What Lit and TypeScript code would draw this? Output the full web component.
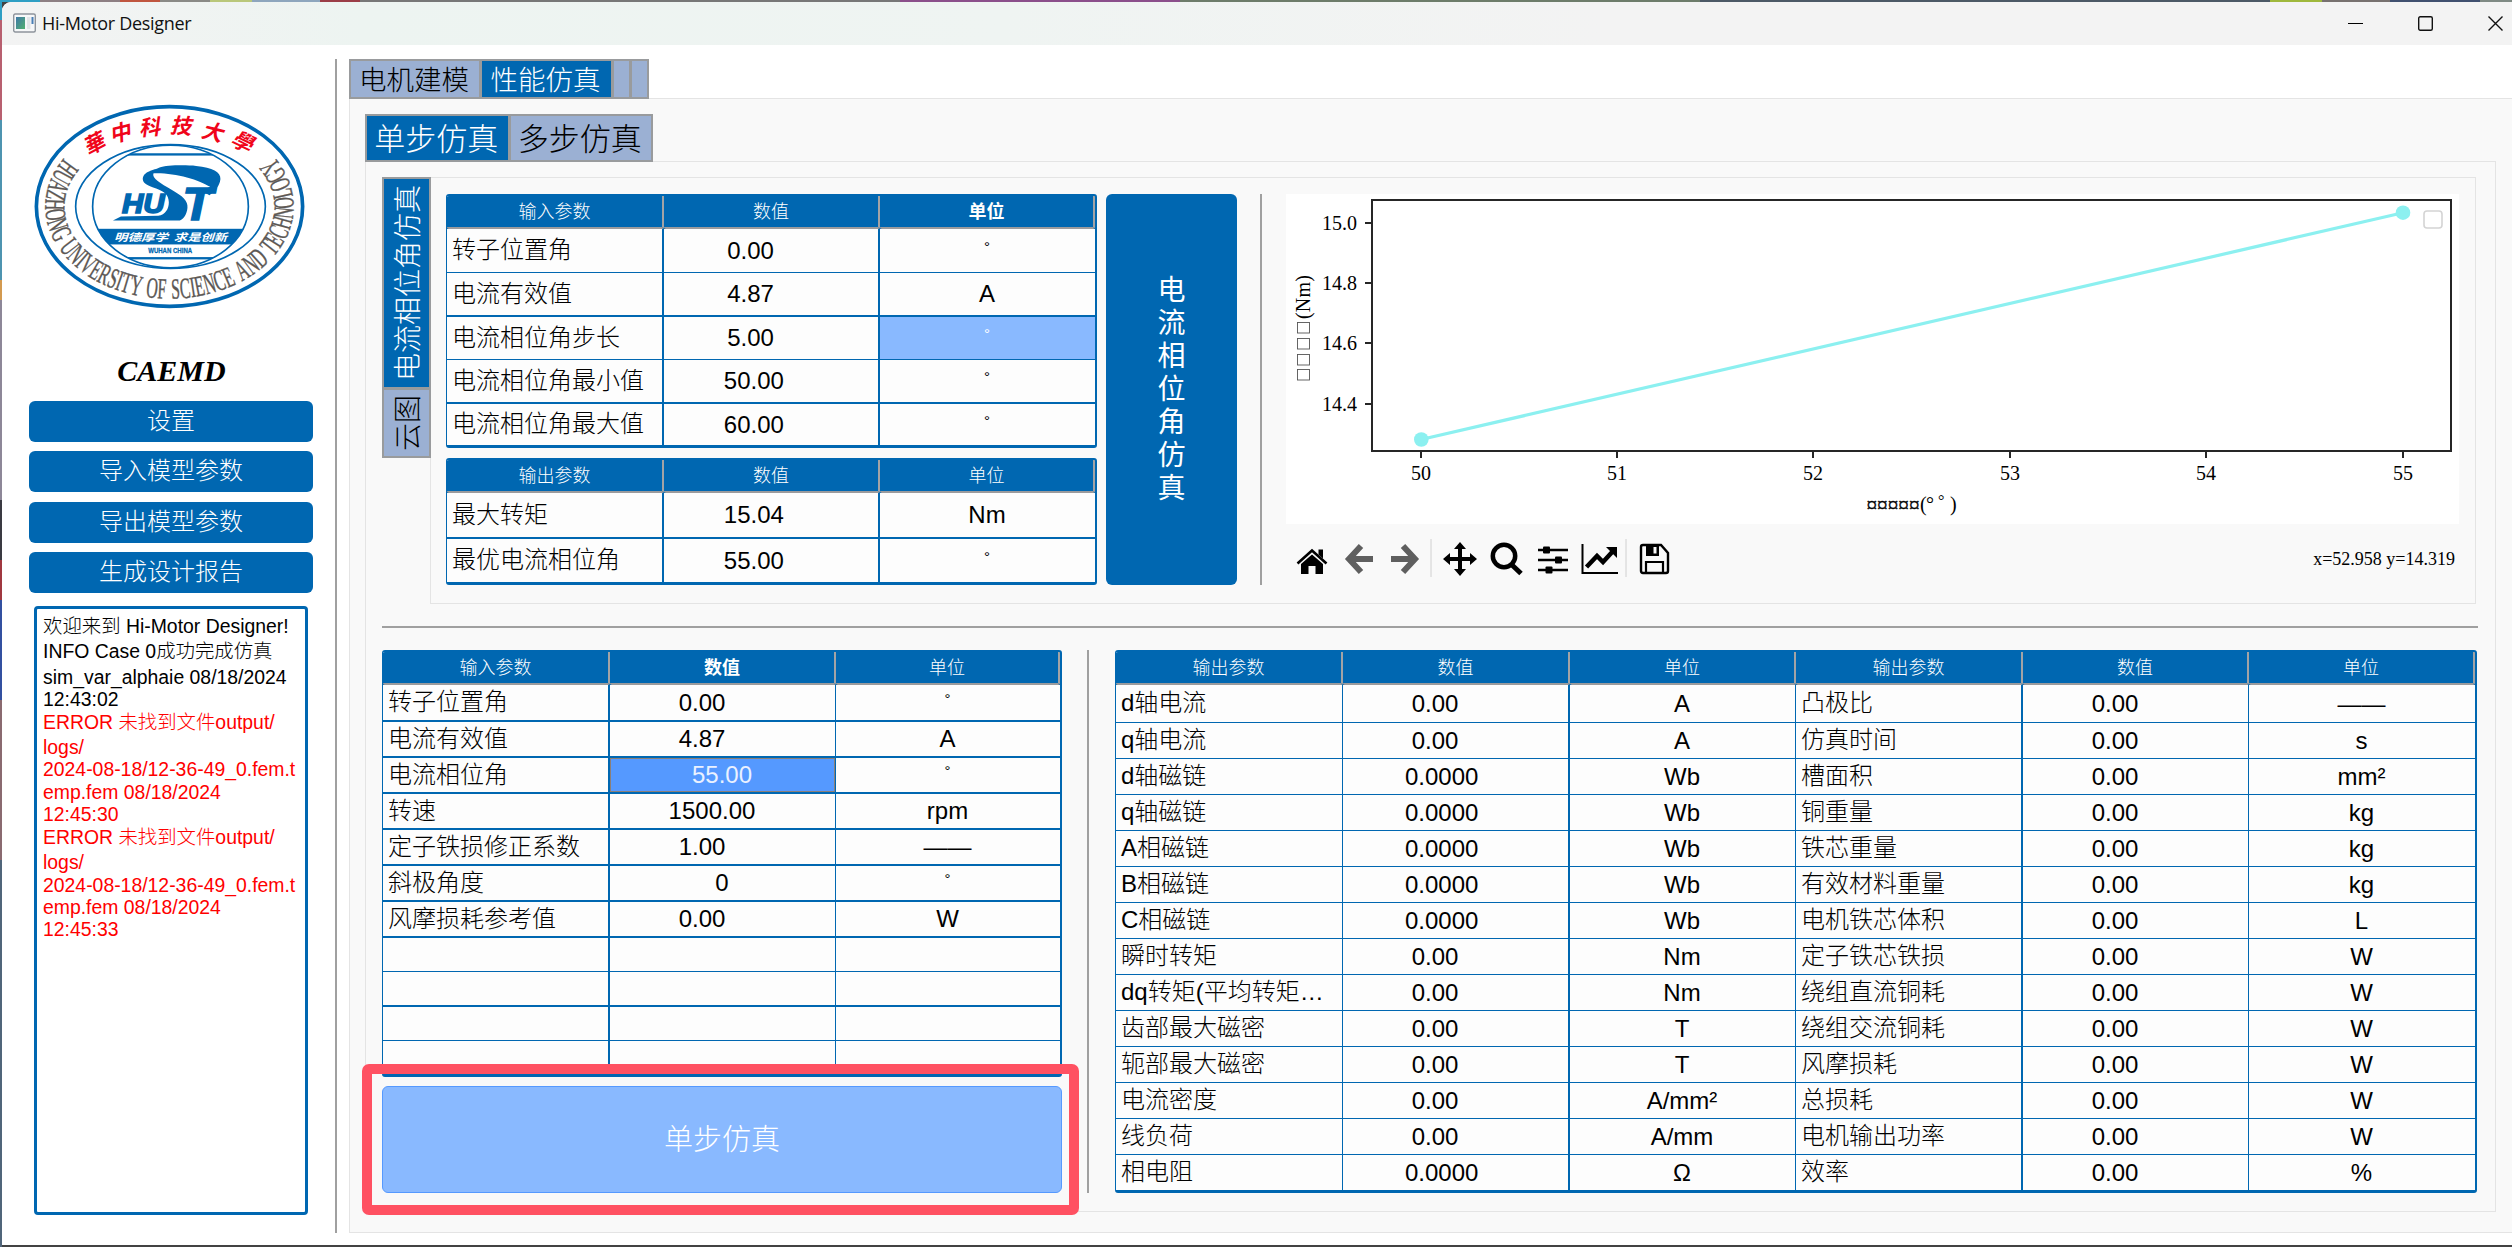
import { LitElement, html, svg, css, nothing } from "lit";
import { customElement, property } from "lit/decorators.js";
import { classMap } from "lit/directives/class-map.js";
import { styleMap } from "lit/directives/style-map.js";

const BLUE = "#0067b1";

type Row = { h: number; line: number; cells: string[] };

const num = (v: string) => v.padEnd(10, " ");

@customElement("param-table")
class ParamTable extends LitElement {
  @property({ attribute: false }) heads: string[] = [];
  @property({ attribute: false }) cols: number[] = [];
  @property({ attribute: false }) lines: number[] = [];
  @property({ attribute: false }) rows: Row[] = [];
  @property({ type: Number }) boldHead = -1;
  @property() selected = "";
  @property() tone = "light";

  static styles = css`
    :host { display: block; }
    .table {
      border: solid #0067b1; border-width: 2px 2px 3px 1px; border-radius: 3px;
      background: #fdfdfd; overflow: hidden;
      font: 24px/1 "Liberation Sans", "Noto Sans CJK SC", sans-serif; color: #000;
    }
    .row { display: grid; box-sizing: border-box; }
    .head { height: 33px; background: #0067b1; color: #fff; font-size: 18px; font-weight: 300; }
    .h {
      display: flex; align-items: center; justify-content: center; box-sizing: border-box;
      border-right: 2px solid #a3a3a5; border-bottom: 2px solid #9b9b9d; border-radius: 0 0 2px 2px;
    }
    .bold { font-weight: 700; }
    .c {
      display: flex; align-items: center; justify-content: center; box-sizing: border-box;
      white-space: pre; border: 0 solid #0067b1; min-width: 0; font-weight: 300; padding-right: 1px;
    }
    .c.name { justify-content: flex-start; padding-left: 5px; padding-bottom: 1px; }
    .c.deg { font-size: 15px; padding-bottom: 9px; }
    .c.sel { background: #89b9ff; color: #fff; }
    .c.sel.strong { background: #5599ff; color: #eaf1ff; box-shadow: inset 0 0 0 1px #8b7f78; }
  `;

  render() {
    const grid = this.cols.map((c) => `${c}px`).join(" ");
    return html`<div class="table">
      <div class="row head" style=${styleMap({ gridTemplateColumns: grid })}>
        ${this.heads.map((t, i) => html`<div class=${classMap({ h: true, bold: i === this.boldHead })}>${t}</div>`)}
      </div>
      ${this.rows.map((r, ri) => html`<div class="row" style=${styleMap({ gridTemplateColumns: grid, height: `${r.h}px` })}>
        ${this.cols.map((_, i) => {
          const t = r.cells[i] ?? "";
          const sel = this.selected === `${ri},${i}`;
          return html`<div class=${classMap({
            c: true, name: i % 3 === 0, deg: t === "°", sel, strong: sel && this.tone === "strong",
          })} style=${styleMap({ borderRightWidth: `${this.lines[i]}px`, borderBottomWidth: `${r.line}px` })}>${t}</div>`;
        })}
      </div>`)}
    </div>`;
  }
}

const CAP: Record<string, number> = {
  A: 0.72, C: 0.67, D: 0.72, E: 0.61, F: 0.56, G: 0.72, H: 0.72, I: 0.33, L: 0.61, N: 0.72,
  O: 0.72, R: 0.67, S: 0.56, T: 0.61, U: 0.72, V: 0.72, Y: 0.72, Z: 0.61, " ": 0.34,
};

@customElement("hust-emblem")
class HustEmblem extends LitElement {
  static styles = css`
    :host { display: block; }
    svg { display: block; width: 273px; height: 207px; }
    .ring { font: 88px "Liberation Serif", serif; fill: #5c5855; stroke: #5c5855; stroke-width: 1.2; text-anchor: middle; }
    .name { font: 700 64px "Noto Sans CJK SC", sans-serif; fill: #f0051a; text-anchor: middle; }
    .motto { font: italic 700 31px "Noto Sans CJK SC", sans-serif; fill: #fff; }
    .city { font: 700 21px "Liberation Sans", sans-serif; fill: #0067b1; stroke: #0067b1; stroke-width: 0.8; }
    .hu { font: italic 700 84px "Liberation Sans", sans-serif; fill: #0067b1; stroke: #0067b1; stroke-width: 5; }
    .t { font: italic 700 138px "Liberation Sans", sans-serif; fill: #0067b1; stroke: #0067b1; stroke-width: 4; }
  `;

  private ring() {
    const text = "HUAZHONG UNIVERSITY OF SCIENCE AND TECHNOLOGY";
    const cx = 510, cy = 621, rx = 373, ry = 277;
    const a0 = Math.PI + Math.asin(146 / ry), a1 = -Math.asin(150 / ry);
    const n = 1500;
    const pts: { a: number; s: number }[] = [];
    let s = 0, px = 0, py = 0;
    for (let i = 0; i <= n; i++) {
      const a = a0 + ((a1 - a0) * i) / n;
      const x = cx + rx * Math.cos(a), y = cy + ry * Math.sin(a);
      if (i) s += Math.hypot(x - px, y - py);
      px = x; py = y;
      pts.push({ a, s });
    }
    const total = [...text].reduce((t, c) => t + CAP[c], 0);
    let used = 0;
    return [...text].map((c) => {
      const mid = ((used + CAP[c] / 2) / total) * s;
      used += CAP[c];
      if (c === " ") return nothing;
      const p = pts.find((q) => q.s >= mid) ?? pts[n];
      const x = cx + rx * Math.cos(p.a), y = cy + ry * Math.sin(p.a);
      const deg = (Math.atan2(-ry * Math.cos(p.a), rx * Math.sin(p.a)) * 180) / Math.PI;
      return svg`<text class="ring" transform="translate(${x} ${y}) rotate(${deg}) scale(0.54 1)">${c}</text>`;
    });
  }

  render() {
    const name: [string, number, number, number][] = [
      ["華", 288, 432, -28], ["中", 366, 400, -14], ["科", 455, 384, -4],
      ["技", 549, 380, 4], ["大", 643, 399, 14], ["學", 733, 429, 26],
    ];
    return html`<svg viewBox="100 310 820 622">
      <defs><clipPath id="disc"><ellipse cx="513" cy="621" rx="235" ry="185"/></clipPath></defs>
      <ellipse cx="510" cy="621" rx="400" ry="300" fill="#fff" stroke=${BLUE} stroke-width="11"/>
      <ellipse cx="513" cy="621" rx="285" ry="186" fill="none" stroke=${BLUE} stroke-width="5"/>
      <g clip-path="url(#disc)" fill=${BLUE}>
        <rect x="270" y="461" width="490" height="7"/>
        <rect x="270" y="688" width="490" height="47"/>
        <rect x="270" y="773" width="490" height="7"/>
      </g>
      <ellipse cx="513" cy="621" rx="234" ry="184" fill="none" stroke=${BLUE} stroke-width="5"/>
      ${this.ring()}
      ${name.map(([c, x, y, r]) => svg`<text class="name" transform="translate(${x} ${y}) rotate(${r}) skewX(-12)" y="22">${c}</text>`)}
      <path fill=${BLUE} d="M430 541C428 515 465 512 480 504C500 496 560 496 590 499C640 503 664 518 663 538C661 560 645 576 630 587L606 574L632 562C600 540 520 518 462 521C455 535 485 552 515 570C550 590 566 604 564 625C562 645 553 658 541 663L340 663L364 651L476 649C498 645 508 628 508 608C507 585 495 577 470 567C445 558 432 552 430 541Z"/>
      <text class="hu" x="367" y="641" textLength="128" lengthAdjust="spacingAndGlyphs">HU</text>
      <text class="t" x="548" y="662" textLength="92" lengthAdjust="spacingAndGlyphs">T</text>
      <text class="motto" x="343" y="724" textLength="163" lengthAdjust="spacingAndGlyphs">明德厚学</text>
      <text class="motto" x="523" y="724" textLength="160" lengthAdjust="spacingAndGlyphs">求是创新</text>
      <text class="city" x="446" y="762" textLength="132" lengthAdjust="spacingAndGlyphs">WUHAN CHINA</text>
    </svg>`;
  }
}

@customElement("torque-chart")
class TorqueChart extends LitElement {
  static styles = css`
    :host { display: block; }
    svg { display: block; width: 1173px; height: 330px; background: #fff; }
    text { font: 20px "Liberation Serif", serif; fill: #000; }
    .glyphs { stroke: #000; stroke-width: 0.4; }
    .small { font-size: 16px; }
  `;

  render() {
    const xs: [number, string][] = [[135, "50"], [331, "51"], [527, "52"], [724, "53"], [920, "54"], [1117, "55"]];
    const ys: [number, string][] = [[29, "15.0"], [89, "14.8"], [149, "14.6"], [210, "14.4"]];
    return html`<svg viewBox="0 0 1173 330">
      <line x1="135" y1="245.5" x2="1117" y2="18.7" stroke="#8cf0f0" stroke-width="3.2"/>
      <circle cx="135.3" cy="245.5" r="7.3" fill="#8cf0f0"/>
      <circle cx="1117" cy="18.7" r="7.3" fill="#8cf0f0"/>
      <rect x="86" y="6" width="1079" height="251" fill="none" stroke="#262626" stroke-width="2"/>
      ${xs.map(([x, t]) => svg`<line x1=${x} y1="257" x2=${x} y2="264" stroke="#262626" stroke-width="2"/>
        <text x=${x} y="286" text-anchor="middle">${t}</text>`)}
      ${ys.map(([y, t]) => svg`<line x1="79" y1=${y} x2="86" y2=${y} stroke="#262626" stroke-width="2"/>
        <text x="71" y=${y + 7} text-anchor="end">${t}</text>`)}
      <rect x="1138" y="17" width="18" height="17" rx="3" fill="#fff" stroke="#d4d4d4" stroke-width="1.6"/>
      ${[129, 145, 161, 176].map((y) => svg`<rect x="11.5" y=${y - 0.5} width="12" height="10.5" fill="none" stroke="#555" stroke-width="0.9"/>`)}
      <text transform="translate(24 125) rotate(-90)" textLength="44">(Nm)</text>
      <text class="glyphs" x="580.5" y="318" textLength="53" lengthAdjust="spacingAndGlyphs">¤¤¤¤¤</text>
      <text x="634" y="317">(</text>
      <text x="640" y="317">°</text>
      <text class="small" x="652" y="312">°</text>
      <text x="664" y="317">)</text>
    </svg>`;
  }
}

@customElement("app-root")
class AppRoot extends LitElement {
  static styles = css`
    :host { display: block; }
    * { box-sizing: border-box; }
    .desktop {
      width: 2512px; height: 1247px; padding: 2px 0 2px 2px; overflow: hidden;
      font-family: "Liberation Sans", "Noto Sans CJK SC", sans-serif; font-weight: 300;
      background:
        linear-gradient(90deg, #2f9fc4 0 40px, #8d7f83 40px 120px, #c0563f 120px 160px, #8a8a86 160px 210px, #b9c77a 210px 252px,
          #8ea6bd 252px 320px, #9b3d47 320px 360px, #777 360px 900px, #8b4f8b 900px 1180px, #6d7c6a 1180px 1700px, #4c5966 1700px 2270px,
          #9fb83c 2270px 2322px, #77716f 2322px 2390px, #40506f 2390px 2480px, #7f8a84 2480px) top / 100% 2px no-repeat,
        linear-gradient(#2f9fc4 0 20px, #b86070 20px 120px, #4d94b0 120px 280px, #d39a50 280px 300px, #8d8798 300px 500px,
          #3a3a42 500px 560px, #a03840 560px 600px, #3350a0 600px 700px, #8a6a70 700px 860px, #50657a 860px) left / 2px 100% no-repeat,
        #434343;
    }
    .window { height: 1243px; display: flex; flex-direction: column; background: #fff; border-radius: 9px 0 0 0; overflow: hidden; }
    .titlebar {
      height: 43px; flex: none; display: flex; align-items: center; padding: 0 9px 2px 11px;
      background: linear-gradient(90deg, #f3f3f3 0, #edf4f1 360px, #eff4f2 1000px, #f3f3f3 1600px);
    }
    .titlebar svg { display: block; }
    .title { font: 18px/24px "Open Sans", sans-serif; margin-left: 6px; color: #111; flex: 1; letter-spacing: -0.3px; }
    .controls { display: flex; gap: 55px; align-items: center; padding-top: 1px; }
    .content { flex: 1; display: flex; min-height: 0; }
    .sidebar { width: 333px; display: flex; flex-direction: column; padding: 58px 22px 30px 27px; }
    .emblem { margin-left: 4px; }
    .brand { font: italic 700 30px/36px "Liberation Serif", serif; text-align: center; margin: 43px 0 12px; padding-left: 1px; }
    .actions { display: flex; flex-direction: column; gap: 9.3px; }
    .action {
      height: 41px; flex: none; border-radius: 6px; background: #0067b1; color: #fff; font-size: 24px; line-height: 39px; text-align: center;
    }
    .log {
      flex: 1; margin: 13px 5px 0 5px; border: 3px solid #0067b1; border-radius: 4px; padding: 6px 0 0 6px;
      font-size: 19.4px; line-height: 22.4px; white-space: pre; color: #000;
    }
    .line { height: 22.45px; }
    .line.tall { height: 25.4px; }
    .err { color: #f00; }
    .vsplit { width: 2px; background: #a0a0a0; flex: none; }
    .vsplit.outer { margin: 14px 12px 12px 0; }
    .main { flex: 1; display: flex; flex-direction: column; padding: 14px 0 12px; min-width: 0; }
    .tabs { display: flex; position: relative; z-index: 1; margin-bottom: -1px; }
    .tab {
      border: 2px solid #999b9d; background: #9bb0d3; color: #000; display: flex; align-items: center; justify-content: center;
      margin-right: -1px; padding: 0 2px 3px 0;
    }
    .tab.on { background: #0067b1; color: #fff; }
    .big .tab { height: 40px; font-size: 27.5px; }
    .sub .tab { height: 48px; font-size: 31px; }
    .w1 { width: 132px; } .w2 { width: 133px; } .w3 { width: 19px; } .w4 { width: 144.5px; }
    .panel { flex: 1; border: 1px solid #e4e4e4; background: #f9f9f9; display: flex; flex-direction: column; min-height: 0; }
    .p1 { border-right: 0; padding: 15px 16px 20px 15px; }
    .p2 { padding: 15px 17px 17px 16px; }
    .upper { height: 427px; display: flex; flex: none; margin-right: 2px; }
    .vtabs { display: flex; flex-direction: column; width: 49px; margin-right: -1px; position: relative; z-index: 1; }
    .vtabs .tab { margin: 0 0 -1px; padding: 0 2px 0 0; font-size: 28px; writing-mode: vertical-rl; text-orientation: sideways; width: 49px; }
    .vtabs .tab span { transform: rotate(180deg); }
    .v1 { height: 212px; } .v2 { height: 70px; }
    .p3 { flex-direction: row; padding: 16px 16px 0 15px; }
    .pair { width: 651px; display: flex; flex-direction: column; gap: 10px; }
    .run {
      width: 131px; height: 391px; margin-left: 9px; border-radius: 6px; background: #0067b1; color: #fff; font-size: 28px; line-height: 33px;
      display: flex; flex-direction: column; align-items: center; justify-content: center; text-align: center; font-weight: 400;
    }
    .upper .vsplit { height: 391px; margin: 0 24px 0 23px; }
    .figure { width: 1173px; }
    .tools { height: 40px; margin-top: 14px; display: flex; align-items: center; }
    .tools svg { display: block; }
    .coords { margin-left: auto; font: 18px "Liberation Serif", serif; padding: 3px 4px 0 0; }
    .hsplit { height: 2px; background: #a0a0a0; margin: 22px 0; flex: none; }
    .lower { display: flex; height: 543px; flex: none; }
    .left { width: 680px; position: relative; display: flex; flex-direction: column; gap: 9px; }
    .step {
      height: 107px; border: 1px solid #5599ff; border-radius: 6px; background: #89b9ff; color: #fff; font-size: 29px;
      display: flex; align-items: center; justify-content: center; padding-bottom: 6px;
    }
    .mark { position: absolute; left: -20.5px; top: 413.5px; width: 717px; height: 151px; border: 10.5px solid #ff5162; border-radius: 7px; }
    .lower .vsplit { margin: 0 26px 0 25px; }
    .right { width: 1362px; }
  `;

  private tool(w: number, ml: number, body: unknown) {
    return html`<svg width=${w} height="40" viewBox="0 0 ${w} 40" style=${styleMap({ marginLeft: `${ml}px` })}>${body}</svg>`;
  }

  private toolbar() {
    return html`<div class="tools">
      ${this.tool(32, 10, svg`<path d="M1.500 25.500L16 12.500L30.500 25.500" fill="none" stroke="#000" stroke-width="2.600"/><path d="M22.500 11.500h4.500v9l-4.500-4z"/><path d="M5 26L16 16.500L27 26V36H19.500V28H12.500V36H5Z"/>`)}
      ${this.tool(30, 16, svg`<path d="M17 8L5 21L17 34M6 21H29" fill="none" stroke="#5f5f5f" stroke-width="6"/>`)}
      ${this.tool(30, 16, svg`<path d="M13 8L25 21L13 34M24 21H1" fill="none" stroke="#5f5f5f" stroke-width="6"/>`)}
      ${this.tool(2, 10, svg`<path d="M1 1V39" stroke="#d0d0d0"/>`)}
      ${this.tool(36, 10, svg`<path d="M18 8V34M5 21H31" stroke="#000" stroke-width="4"/><path d="M18 4L24 11H12ZM18 38L24 31H12ZM1 21L8 15V27ZM35 21L28 15V27Z"/>`)}
      ${this.tool(34, 12, svg`<circle cx="14" cy="18" r="11.200" fill="none" stroke="#000" stroke-width="4.500"/><path d="M21.500 26.500L31 35.500" stroke="#000" stroke-width="5"/>`)}
      ${this.tool(32, 13, svg`<path d="M1 12H31M1 22H31M1 32H31" stroke="#000" stroke-width="2.400"/><rect x="6" y="8.500" width="7" height="7" rx="1"/><rect x="18" y="18.500" width="7" height="7" rx="1"/><rect x="8.500" y="28.500" width="7" height="7" rx="1"/>`)}
      ${this.tool(38, 12, svg`<path d="M1.500 6V35H37" fill="none" stroke="#000" stroke-width="2"/><path d="M5.500 29L16 18L22 24L33 12" fill="none" stroke="#000" stroke-width="4.500"/><path d="M25 9H36V20Z"/>`)}
      ${this.tool(2, 6, svg`<path d="M1 1V39" stroke="#d0d0d0"/>`)}
      ${this.tool(32, 12, svg`<path d="M2 9Q2 7 4 7H22L29 15V33Q29 35 27 35H4Q2 35 2 33Z" fill="none" stroke="#000" stroke-width="2.400"/><path d="M7 7H20V18H7Z M14.500 9V15.500H17.500V9Z" fill-rule="evenodd"/><path d="M7 35V24H24V35" fill="none" stroke="#000" stroke-width="2.200"/>`)}
      <div class="coords">x=52.958 y=14.319</div>
    </div>`;
  }

  render() {
    const r = (h: number, line: number, ...cells: string[]): Row => ({ h, line, cells });
    const sweepIn = [
      r(44, 1, "转子位置角", num("0.00"), "°"),
      r(44, 2, "电流有效值", num("4.87"), "A"),
      r(43, 1, "电流相位角步长", num("5.00"), "°"),
      r(44, 2, "电流相位角最小值", num("50.00"), "°"),
      r(41, 0, "电流相位角最大值", num("60.00"), "°"),
    ];
    const sweepOut = [
      r(46, 2, "最大转矩", num("15.04"), "Nm"),
      r(43, 0, "最优电流相位角", num("55.00"), "°"),
    ];
    const stepIn = [
      r(37, 2, "转子位置角", num("0.00"), "°"),
      r(36, 2, "电流有效值", num("4.87"), "A"),
      r(36, 2, "电流相位角", "55.00", "°"),
      r(36, 2, "转速", num("1500.00"), "rpm"),
      r(36, 2, "定子铁损修正系数", num("1.00"), "——"),
      r(36, 2, "斜极角度", "0", "°"),
      r(36, 2, "风摩损耗参考值", num("0.00"), "W"),
      r(34, 1), r(35, 2), r(34, 1), r(33, 0),
    ];
    const z = num("0.00"), z4 = num("0.0000");
    const out: string[][] = [
      ["d轴电流", z, "A", "凸极比", z, "——"],
      ["q轴电流", z, "A", "仿真时间", z, "s"],
      ["d轴磁链", z4, "Wb", "槽面积", z, "mm²"],
      ["q轴磁链", z4, "Wb", "铜重量", z, "kg"],
      ["A相磁链", z4, "Wb", "铁芯重量", z, "kg"],
      ["B相磁链", z4, "Wb", "有效材料重量", z, "kg"],
      ["C相磁链", z4, "Wb", "电机铁芯体积", z, "L"],
      ["瞬时转矩", z, "Nm", "定子铁芯铁损", z, "W"],
      ["dq转矩(平均转矩…", z, "Nm", "绕组直流铜耗", z, "W"],
      ["齿部最大磁密", z, "T", "绕组交流铜耗", z, "W"],
      ["轭部最大磁密", z, "T", "风摩损耗", z, "W"],
      ["电流密度", z, "A/mm²", "总损耗", z, "W"],
      ["线负荷", z, "A/mm", "电机输出功率", z, "W"],
      ["相电阻", z4, "Ω", "效率", z, "%"],
    ];
    const outRows = out.map((cells, i) => r(i === 0 ? 38 : i === 13 ? 35 : 36, i === 13 ? 0 : 1, ...cells));
    const inHeads = ["输入参数", "数值", "单位"], outHeads = ["输出参数", "数值", "单位"];
    const log: [string, boolean, boolean][] = [
      ["欢迎来到 Hi-Motor Designer!", true, false],
      ["INFO Case 0成功完成仿真", true, false],
      ["sim_var_alphaie 08/18/2024", false, false],
      ["12:43:02", false, false],
      ...["12:45:30", "12:45:33"].flatMap((t): [string, boolean, boolean][] => [
        ["ERROR 未找到文件output/", true, true],
        ["logs/", false, true],
        ["2024-08-18/12-36-49_0.fem.t", false, true],
        ["emp.fem 08/18/2024", false, true],
        [t, false, true],
      ]),
    ];

    return html`<div class="desktop"><div class="window">
      <div class="titlebar">
        <svg width="23" height="20" viewBox="0 0 23 20">
          <defs><linearGradient id="ic" x2="1" y2="1"><stop stop-color="#3f78a8"/><stop offset="1" stop-color="#52b070"/></linearGradient></defs>
          <rect x="0.700" y="1" width="21.600" height="18" rx="1.500" fill="#f6f7f8" stroke="#8e949c" stroke-width="1.400"/>
          <rect x="3" y="4" width="9" height="12" fill="url(#ic)"/>
          <rect x="14" y="4" width="3.500" height="12" fill="#e3e5e8"/>
          <rect x="18.500" y="4" width="2" height="7" fill="#4a7fb5"/>
        </svg>
        <div class="title">Hi-Motor Designer</div>
        <div class="controls">
          <svg width="15" height="15" viewBox="0 0 15 15"><path d="M0 7.500H15" stroke="#000"/></svg>
          <svg width="15" height="15" viewBox="0 0 15 15"><rect x="0.700" y="0.700" width="13.600" height="13.600" rx="1.500" fill="none" stroke="#111" stroke-width="1.400"/></svg>
          <svg width="15" height="15" viewBox="0 0 15 15"><path d="M0.500 0.500L14.500 14.500M14.500 0.500L0.500 14.500" stroke="#111" stroke-width="1.400"/></svg>
        </div>
      </div>
      <div class="content">
        <div class="sidebar">
          <hust-emblem class="emblem"></hust-emblem>
          <div class="brand">CAEMD</div>
          <div class="actions">
            ${["设置", "导入模型参数", "导出模型参数", "生成设计报告"].map((t) => html`<div class="action">${t}</div>`)}
          </div>
          <div class="log">${log.map(([t, tall, err]) => html`<div class=${classMap({ line: true, tall, err })}>${t}</div>`)}</div>
        </div>
        <div class="vsplit outer"></div>
        <div class="main">
          <div class="tabs big">
            <div class="tab w1">电机建模</div><div class="tab on w2">性能仿真</div><div class="tab w3"></div><div class="tab w3"></div>
          </div>
          <div class="panel p1">
            <div class="tabs sub"><div class="tab on w4">单步仿真</div><div class="tab w4">多步仿真</div></div>
            <div class="panel p2">
              <div class="upper">
                <div class="vtabs">
                  <div class="tab on v1"><span>电流相位角仿真</span></div>
                  <div class="tab v2"><span>云图</span></div>
                </div>
                <div class="panel p3">
                  <div class="pair">
                    <param-table .heads=${inHeads} .cols=${[217, 216, 215]} .lines=${[2, 2, 0]} .rows=${sweepIn} .boldHead=${2} selected="2,2"></param-table>
                    <param-table .heads=${outHeads} .cols=${[217, 216, 215]} .lines=${[2, 2, 0]} .rows=${sweepOut}></param-table>
                  </div>
                  <div class="run">${[..."电流相位角仿真"].map((c) => html`<span>${c}</span>`)}</div>
                  <div class="vsplit"></div>
                  <div class="figure">
                    <torque-chart></torque-chart>
                    ${this.toolbar()}
                  </div>
                </div>
              </div>
              <div class="hsplit"></div>
              <div class="lower">
                <div class="left">
                  <param-table .heads=${inHeads} .cols=${[227, 226, 224]} .lines=${[2, 1, 0]} .rows=${stepIn} .boldHead=${1} selected="2,1" tone="strong"></param-table>
                  <div class="step">单步仿真</div>
                  <div class="mark"></div>
                </div>
                <div class="vsplit"></div>
                <div class="right">
                  <param-table .heads=${[...outHeads, ...outHeads]} .cols=${[227, 227, 226, 227, 226, 226]} .lines=${[1, 2, 1, 2, 1, 0]} .rows=${outRows}></param-table>
                </div>
              </div>
            </div>
          </div>
        </div>
      </div>
    </div></div>`;
  }
}
